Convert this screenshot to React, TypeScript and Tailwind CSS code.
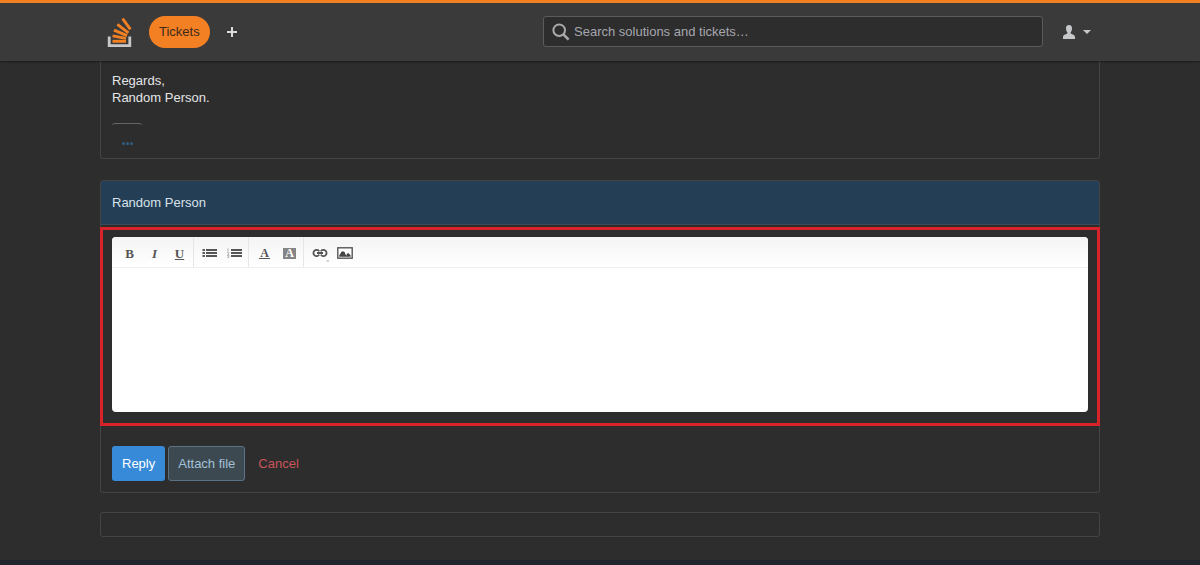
import type { ReactNode } from 'react'

function Logo() {
  return (
    <svg viewBox="0 0 26 30" className="w-[26px] h-[30px]" fill="none">
      <path d="M2.2 19.5V28.6H22.8V19.5" stroke="#c8c8cb" strokeWidth="2.8" />
      <g stroke="#f48024" strokeWidth="2.9">
        <path d="M5.5 24.3H19" />
        <path d="M5.6 18.9L19 21.4" />
        <path d="M7 13.2L20 18.6" />
        <path d="M10.4 7.4L21.4 15.8" />
        <path d="M15.6 1.6L23.4 12.4" />
      </g>
    </svg>
  )
}

function SearchIcon() {
  return (
    <svg viewBox="0 0 18 18" className="w-[18px] h-[18px] shrink-0" fill="none" stroke="#aaaaad">
      <circle cx="7.2" cy="7.2" r="5.8" strokeWidth="2" />
      <path d="M11.4 11.4L16.6 16.6" strokeWidth="2.6" />
    </svg>
  )
}

function ListIcon({ numbered = false }: { numbered?: boolean }) {
  return (
    <svg viewBox="0 0 15 10" className="w-[15px] h-[10px]" fill="#555">
      <path d="M4 1h11v2H4zM4 4h11v2H4zM4 7h11v2H4z" />
      {numbered ? (
        <path d="M1 .5v3M.2 4.6h1.5v1.4L.3 7.4h1.6M.3 9.3h1.6V7.6" fill="none" stroke="#888" strokeWidth=".7" />
      ) : (
        <path d="M.5 1h2.4v2H.5zM.5 4h2.4v2H.5zM.5 7h2.4v2H.5z" />
      )}
    </svg>
  )
}

function LinkIcon() {
  return (
    <svg viewBox="0 0 18 18" className="w-[18px] h-[18px]" fill="none" stroke="#555" strokeWidth="1.8">
      <path d="M8.2 7.4A3.1 3.1 0 1 0 8.2 10.6M9.8 7.4A3.1 3.1 0 1 1 9.8 10.6M6 9H12" />
      <path d="M15.5 17H18" stroke="#aaa" strokeWidth="1" />
    </svg>
  )
}

function ImageIcon() {
  return (
    <svg viewBox="0 0 16 12" className="w-4 h-3">
      <rect x=".8" y=".8" width="14.4" height="10.4" fill="#fff" stroke="#555" strokeWidth="1.4" />
      <path d="M2.3 9.8V8.2L3.4 6.8Q3.7 4.2 5.8 4.2T8.4 7.3L9.3 8.5L10 7Q11 5.4 12 6.7L13.6 8.2V9.8Z" fill="#444" />
    </svg>
  )
}

function ToolGroup({ children }: { children: ReactNode }) {
  return <div className="flex items-center pl-[3px] pr-px border-r border-[#e6e6e6] last:border-r-0">{children}</div>
}

function Tool({ label, children }: { label: string; children: ReactNode }) {
  return (
    <button type="button" title={label} aria-label={label} className="w-[25px] h-[30px] pt-0.5 flex items-center justify-center">
      {children}
    </button>
  )
}

function Header() {
  return (
    <header className="border-t-[3px] border-[#f48024] bg-[#3a3a3a] shadow-[0_1px_2px_rgba(0,0,0,0.4)] relative">
      <div className="max-w-[1000px] mx-auto h-[58px] pb-px flex items-center">
        <a href="#home" aria-label="Home" className="ml-[7px] mr-4">
          <Logo />
        </a>
        <a href="#tickets" className="h-8 px-2.5 flex items-center rounded-full bg-[#f48024] text-[#3d2a1b]">
          Tickets
        </a>
        <button type="button" aria-label="New ticket" className="ml-4">
          <svg viewBox="0 0 12 12" className="w-3 h-3" stroke="#dcdcde" strokeWidth="2">
            <path d="M1 6H11M6 1V11" />
          </svg>
        </button>
        <label className="ml-auto w-1/2 h-[31px] px-2 flex items-center gap-1 rounded-[3px] border border-[#5a5b5e] bg-[#2d2d2d]">
          <SearchIcon />
          <input
            type="search"
            aria-label="Search"
            placeholder="Search solutions and tickets…"
            className="flex-1 bg-transparent outline-none placeholder:text-[#a6a7ad]"
          />
        </label>
        <button type="button" aria-label="Account" className="ml-5 mr-[9px] flex items-center gap-2">
          <svg viewBox="0 0 12 14" className="w-3 h-[14px]" fill="#c6c7cb">
            <path d="M6 0C8.2 0 9 1.5 9 3.5C9 5.6 8.2 6.5 7.6 7.4V8.6C9.5 9.5 12 10 12 12.2V14H0V12.2C0 10 2.5 9.5 4.4 8.6V7.4C3.8 6.5 3 5.6 3 3.5C3 1.5 3.8 0 6 0Z" />
          </svg>
          <svg viewBox="0 0 8 4" className="w-2 h-1" fill="#c6c7cb">
            <path d="M0 0H8L4 4Z" />
          </svg>
        </button>
      </div>
    </header>
  )
}

function Editor() {
  return (
    <div className="-mx-px mt-0.5 px-[9px] pt-[7px] pb-[11px] border-3 border-[#d9232b]">
      <div className="rounded-[4px] bg-white overflow-hidden">
        <div className="flex h-[31px] pl-0.5 border-b border-[#f0f0f0] bg-linear-to-b from-[#f4f4f4] to-white text-[#555] font-['Liberation_Serif',serif] font-bold">
          <ToolGroup>
            <Tool label="Bold">B</Tool>
            <Tool label="Italic"><em>I</em></Tool>
            <Tool label="Underline"><u>U</u></Tool>
          </ToolGroup>
          <ToolGroup>
            <Tool label="Bulleted list"><ListIcon /></Tool>
            <Tool label="Numbered list"><ListIcon numbered /></Tool>
          </ToolGroup>
          <ToolGroup>
            <Tool label="Text colour">
              <span className="leading-[10px] text-xs border-b border-[#555] px-px">A</span>
            </Tool>
            <Tool label="Background colour">
              <span className="w-[13px] h-[11px] leading-[11px] text-xs text-center bg-[#858585] text-white">A</span>
            </Tool>
          </ToolGroup>
          <ToolGroup>
            <Tool label="Link"><LinkIcon /></Tool>
            <Tool label="Image"><ImageIcon /></Tool>
          </ToolGroup>
        </div>
        <textarea aria-label="Message" className="block w-full h-36 p-3 text-[#333] resize-none outline-none" />
      </div>
    </div>
  )
}

export default function App() {
  return (
    <div className="min-h-screen flex flex-col bg-[#2d2d2d] text-[#e4e5e7] text-[13px] leading-[17px] font-['Liberation_Sans',Arial,sans-serif]">
      <Header />
      <main className="w-full max-w-[1000px] mx-auto flex-1">
        <article className="border border-t-0 border-[#444] rounded-b-[3px] px-[11px] pt-[11px] pb-2">
          <p>
            Regards,
            <br />
            Random Person.
          </p>
          <button
            type="button"
            aria-label="Show trimmed content"
            className="mt-[17px] w-[30px] h-[27px] flex items-center justify-center gap-px pt-3 border-t border-[#666] rounded-[3px]"
          >
            <span className="w-[3px] h-[3px] rounded-full bg-[#2f5f86]" />
            <span className="w-[3px] h-[3px] rounded-full bg-[#2f5f86]" />
            <span className="w-[3px] h-[3px] rounded-full bg-[#2f5f86]" />
          </button>
        </article>

        <form className="mt-[21px] border border-[#444] rounded-[3px]">
          <h2 className="h-11 px-[11px] flex items-center bg-[#243f55] border-b border-[#3a4a58] text-[#d9e2ea]">
            Random Person
          </h2>
          <Editor />
          <div className="px-[11px] pt-5 pb-[11px] flex items-center gap-[3px]">
            <button type="submit" className="h-[35px] px-2.5 rounded-[3px] bg-[#378ad8] text-white">
              Reply
            </button>
            <button type="button" className="h-[35px] px-[9px] rounded-[3px] border border-[#5c7385] bg-[#3d4951] text-[#a2c0d8]">
              Attach file
            </button>
            <button type="button" className="h-[35px] px-2.5 text-[#cb5458]">
              Cancel
            </button>
          </div>
        </form>

        <section className="mt-[19px] h-[25px] border border-[#444] rounded-[3px]" />
      </main>
      <footer className="h-[5px] bg-[#20262b]" />
    </div>
  )
}
